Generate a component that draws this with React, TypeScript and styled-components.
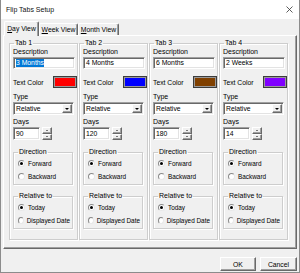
import React from 'react';
import styled, { createGlobalStyle } from 'styled-components';

const GlobalStyle = createGlobalStyle`
  html, body { margin: 0; padding: 0; background: #f0f0f0; }
  * { box-sizing: border-box; }
  body {
    font-family: "Liberation Sans", Arial, sans-serif;
    font-size: 7px;
    color: #000;
  }
`;

const Window = styled.div`
  width: 300px;
  height: 273px;
  background: #f0f0f0;
  border: 1px solid #8c8c8c;
  border-top: none;
  display: flex;
  flex-direction: column;
  overflow: hidden;
`;

const TitleBar = styled.div`
  height: 19px;
  flex: none;
  background: #fff;
  display: flex;
  align-items: center;
  padding-left: 5px;
  padding-right: 6px;
`;

const Title = styled.span`
  font-size: 7px;
  color: #111;
`;

const CloseIcon = styled.svg`
  margin-left: auto;
  width: 7px;
  height: 7px;
`;

const Body = styled.div`
  flex: 1;
  padding: 2px 2px 0 2px;
  display: flex;
  flex-direction: column;
`;

const TabStrip = styled.div`
  height: 14px;
  display: flex;
  align-items: flex-end;
  padding-left: 1px;
  position: relative;
  z-index: 1;
`;

const Tab = styled.div<{ $active?: boolean; $w: number }>`
  width: ${(p) => p.$w}px;
  height: ${(p) => (p.$active ? 15 : 12)}px;
  margin-bottom: ${(p) => (p.$active ? -1 : 0)}px;
  background: #f0f0f0;
  border-top: 1px solid #fff;
  border-left: 1px solid #fff;
  border-right: 1px solid #696969;
  border-radius: 2px 2px 0 0;
  box-shadow: inset -1px 0 0 #a0a0a0;
  display: flex;
  align-items: ${(p) => (p.$active ? 'flex-start' : 'center')};
  padding-top: ${(p) => (p.$active ? 3 : 0)}px;
  justify-content: center;
  font-size: 6.8px;
  line-height: 8px;
  white-space: nowrap;
`;

const U = styled.span`
  text-decoration: underline;
`;

const Panel = styled.div`
  height: 214px;
  flex: none;
  border: 1px solid;
  border-color: #fff #696969 #696969 #fff;
  box-shadow: inset -1px -1px 0 #a0a0a0;
  padding: 3px 0 0 5px;
  display: flex;
  align-items: flex-start;
  gap: 1px;
`;

const Group = styled.fieldset`
  margin: 0;
  min-width: 0;
  width: 69px;
  border: 1px solid #cdcdcd;
  box-shadow: 1px 1px 0 #fff, inset 1px 1px 0 #fff;
  padding: 0 1px 10px 3px;
  display: flex;
  flex-direction: column;
`;

const SubGroup = styled.fieldset<{ $mt: number }>`
  margin: ${(p) => p.$mt}px 3px 0 0;
  min-width: 0;
  border: 1px solid #cdcdcd;
  box-shadow: 1px 1px 0 #fff, inset 1px 1px 0 #fff;
  padding: 1px 2px 1px 3px;
`;

const Legend = styled.legend`
  margin-left: 1px;
  padding: 0 1px;
  font-size: 7px;
  line-height: 8px;
  white-space: nowrap;
`;

const Label = styled.div<{ $mt: number }>`
  margin-top: ${(p) => p.$mt}px;
  font-size: 7px;
  line-height: 8px;
  white-space: nowrap;
`;

const sunken = `
  background: #fff;
  border: 1px solid;
  border-color: #a0a0a0 #fff #fff #a0a0a0;
  box-shadow: inset 1px 1px 0 #696969, inset -1px -1px 0 #e3e3e3;
`;

const TextField = styled.div`
  ${sunken}
  margin-top: 1px;
  width: 62px;
  height: 12px;
  display: flex;
  align-items: center;
  padding-left: 2px;
  font-size: 6.8px;
  line-height: 8px;
  white-space: nowrap;
`;

const Selected = styled.span`
  background: #0078d7;
  color: #fff;
`;

const ColorRow = styled.div`
  margin-top: 7px;
  height: 12px;
  display: flex;
  align-items: center;
  justify-content: space-between;
  font-size: 6.8px;
  white-space: nowrap;
`;

const Swatch = styled.div<{ $color: string }>`
  width: 24px;
  height: 12px;
  margin-right: -1px;
  background: ${(p) => p.$color};
  border: 1px solid #3c3c3c;
  box-shadow: inset 0 0 0 1px #9a9a9a;
`;

const Select = styled.div`
  ${sunken}
  margin-top: 1px;
  width: 61px;
  height: 13px;
  display: flex;
  align-items: stretch;
  padding: 1px;
`;

const SelectText = styled.div`
  flex: 1;
  display: flex;
  align-items: center;
  padding-left: 1px;
  font-size: 6.8px;
`;

const ArrowButton = styled.div<{ $h?: number }>`
  width: 10px;
  ${(p) => (p.$h ? `height: ${p.$h}px;` : '')}
  background: #f0f0f0;
  border: 1px solid;
  border-color: #fff #696969 #696969 #fff;
  box-shadow: inset -1px -1px 0 #a0a0a0;
  display: flex;
  align-items: center;
  justify-content: center;
`;

const Tri = styled.div<{ $up?: boolean; $s: number }>`
  width: 0;
  height: 0;
  border-left: ${(p) => p.$s}px solid transparent;
  border-right: ${(p) => p.$s}px solid transparent;
  ${(p) =>
    p.$up
      ? `border-bottom: ${p.$s - 0.5}px solid #000;`
      : `border-top: ${p.$s - 0.5}px solid #000;`}
`;

const DaysRow = styled.div`
  margin-top: 1px;
  display: flex;
  gap: 2px;
  align-items: stretch;
`;

const DaysInput = styled.div`
  ${sunken}
  width: 27px;
  height: 13px;
  display: flex;
  align-items: center;
  padding-left: 2px;
  font-size: 6.8px;
`;

const Spinner = styled.div`
  display: flex;
  flex-direction: column;
  height: 13px;
`;

const RadioRow = styled.div`
  height: 13px;
  display: flex;
  align-items: center;
  gap: 3px;
  font-size: 6.4px;
  white-space: nowrap;
`;

const Radio = styled.div<{ $on?: boolean }>`
  width: 7px;
  height: 7px;
  margin-left: 1px;
  border-radius: 50%;
  background: #fff;
  border: 1px solid;
  border-color: #8a8a8a #e8e8e8 #e8e8e8 #8a8a8a;
  display: flex;
  align-items: center;
  justify-content: center;
  &::after {
    content: '';
    width: 3px;
    height: 3px;
    border-radius: 50%;
    background: ${(p) => (p.$on ? '#000' : 'transparent')};
  }
`;

const Footer = styled.div`
  margin-top: 8px;
  display: flex;
  justify-content: flex-end;
  gap: 4px;
`;

const Button = styled.div<{ $w: number }>`
  width: ${(p) => p.$w}px;
  height: 14px;
  background: #f0f0f0;
  border: 1px solid;
  border-color: #fff #696969 #696969 #fff;
  box-shadow: inset -1px -1px 0 #a0a0a0;
  display: flex;
  align-items: center;
  justify-content: center;
  font-size: 6.8px;
`;

const tabs = [
  { n: 1, desc: '3 Months', color: '#ff0000', days: '90', sel: true },
  { n: 2, desc: '4 Months', color: '#0000ff', days: '120' },
  { n: 3, desc: '6 Months', color: '#804000', days: '180' },
  { n: 4, desc: '2 Weeks', color: '#8000ff', days: '14' },
];

export default function App() {
  return (
    <>
      <GlobalStyle />
      <Window>
        <TitleBar>
          <Title>Flip Tabs Setup</Title>
          <CloseIcon viewBox="0 0 7 7">
            <path d="M0.5 0.5 L6.5 6.5 M6.5 0.5 L0.5 6.5" stroke="#333" strokeWidth="0.8" fill="none" />
          </CloseIcon>
        </TitleBar>
        <Body>
          <TabStrip>
            <Tab $active $w={35}>
              <span><U>D</U>ay View</span>
            </Tab>
            <Tab $w={39}>
              <span><U>W</U>eek View</span>
            </Tab>
            <Tab $w={41}>
              <span><U>M</U>onth View</span>
            </Tab>
          </TabStrip>
          <Panel>
            {tabs.map((t) => (
              <Group key={t.n}>
                <Legend>Tab {t.n}</Legend>
                <Label $mt={1}>Description</Label>
                <TextField>{t.sel ? <Selected>{t.desc}</Selected> : t.desc}</TextField>
                <ColorRow>
                  <span>Text Color</span>
                  <Swatch $color={t.color} />
                </ColorRow>
                <Label $mt={5}>Type</Label>
                <Select>
                  <SelectText>Relative</SelectText>
                  <ArrowButton>
                    <Tri $s={2.5} />
                  </ArrowButton>
                </Select>
                <Label $mt={3}>Days</Label>
                <DaysRow>
                  <DaysInput>{t.days}</DaysInput>
                  <Spinner>
                    <ArrowButton $h={6.5}>
                      <Tri $up $s={1.5} />
                    </ArrowButton>
                    <ArrowButton $h={6.5}>
                      <Tri $s={1.5} />
                    </ArrowButton>
                  </Spinner>
                </DaysRow>
                <SubGroup $mt={8}>
                  <Legend>Direction</Legend>
                  <RadioRow>
                    <Radio $on />
                    <span>Forward</span>
                  </RadioRow>
                  <RadioRow>
                    <Radio />
                    <span>Backward</span>
                  </RadioRow>
                </SubGroup>
                <SubGroup $mt={7}>
                  <Legend>Relative to</Legend>
                  <RadioRow>
                    <Radio $on />
                    <span>Today</span>
                  </RadioRow>
                  <RadioRow>
                    <Radio />
                    <span>Displayed Date</span>
                  </RadioRow>
                </SubGroup>
              </Group>
            ))}
          </Panel>
          <Footer>
            <Button $w={36}>OK</Button>
            <Button $w={37}>Cancel</Button>
          </Footer>
        </Body>
      </Window>
    </>
  );
}
